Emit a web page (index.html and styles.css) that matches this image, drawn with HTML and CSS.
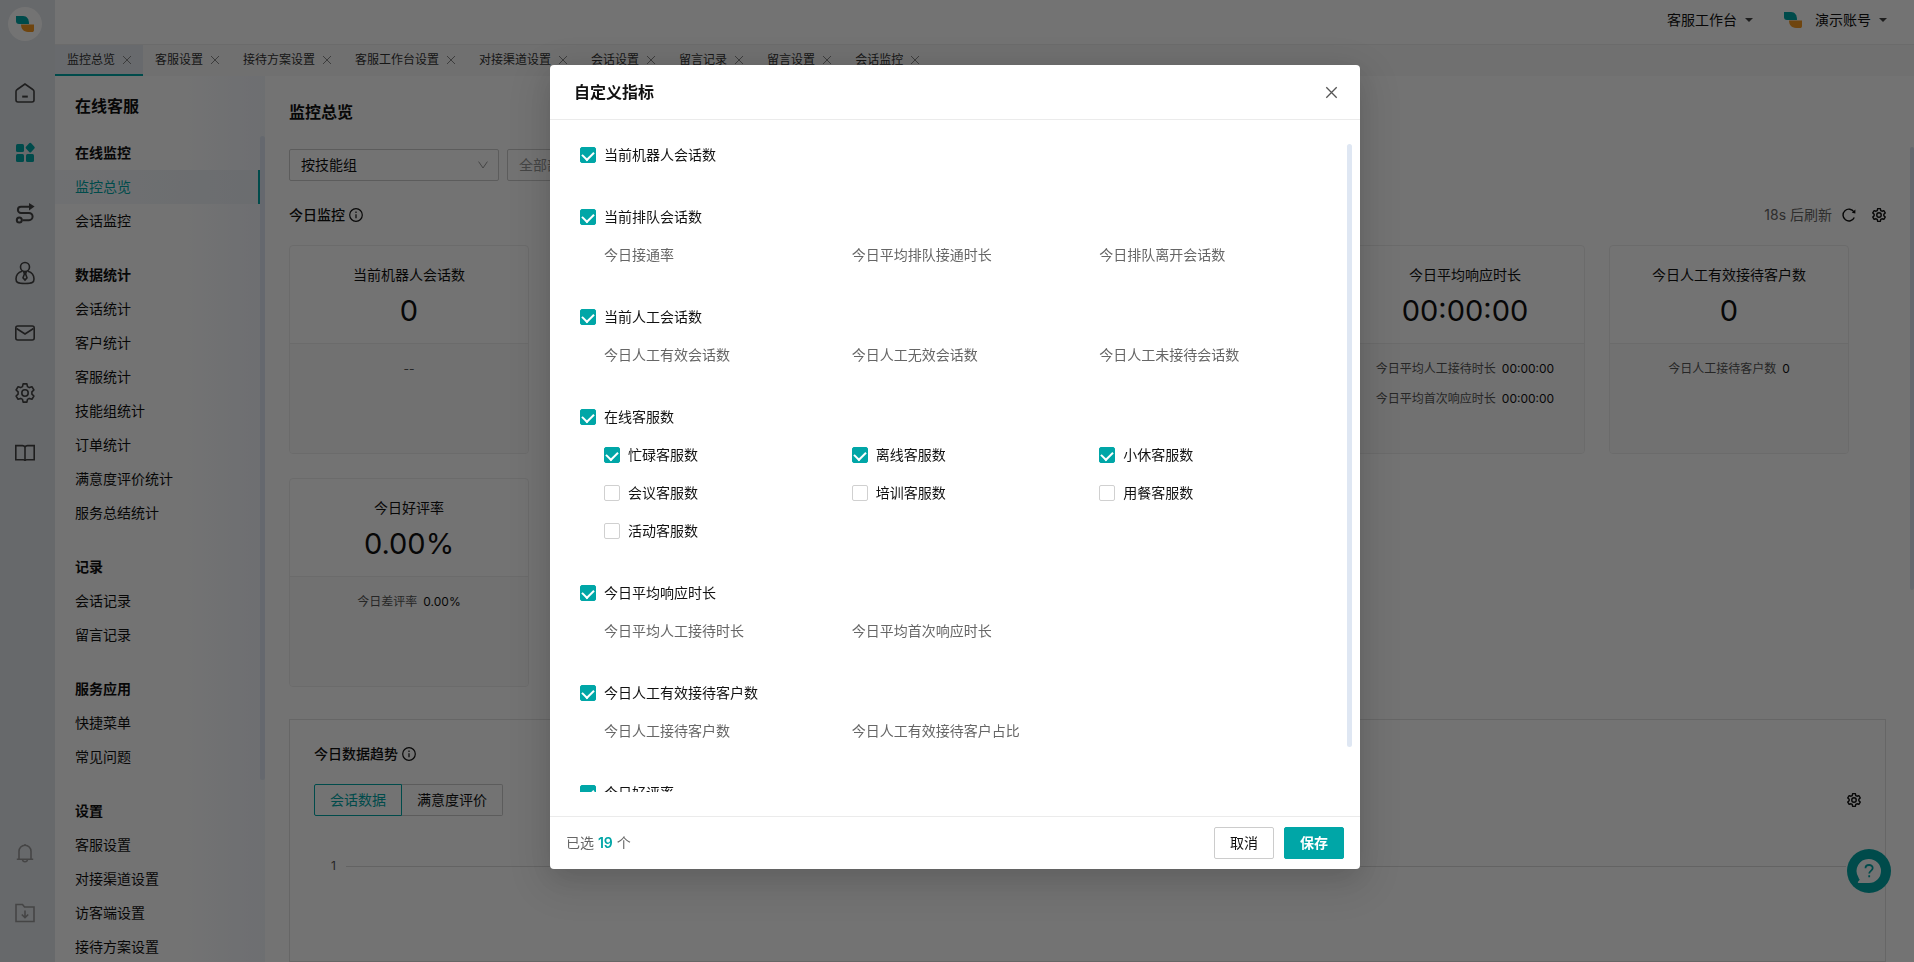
FILE: index.html
```html
<!DOCTYPE html>
<html lang="zh-CN">
<head>
<meta charset="utf-8">
<title>监控总览</title>
<link rel="stylesheet" href="styles.css">
</head>
<body>
<svg class="defs" aria-hidden="true">
  <symbol id="i-x" viewBox="0 0 10 10"><path d="M1 1l8 8M9 1l-8 8"/></symbol>
  <symbol id="i-info" viewBox="0 0 14 14"><circle cx="7" cy="7" r="6.3"/><path d="M7 6.2v4M7 3.6v1.3"/></symbol>
  <symbol id="i-down" viewBox="0 0 10 10"><path d="M.6 1.6L5 8l4.400-6.400"/></symbol>
  <symbol id="i-logo" viewBox="0 0 18 18"><path fill="#00a6a7" d="M0 1h7c4 0 6 3 6 8H3C1 9 0 8 0 6z"/><path fill="#f59a23" d="M5 9.600h13V15c0 1.500-.8 2-2 2h-4c-4.500 0-7-3-7-7.400z"/></symbol>
  <symbol id="i-gear" viewBox="0 0 20 20"><path stroke-linejoin="round" d="M8.100.9h3.800l.6 2.700 1.800 1 2.600-.9 2 3.300-2 1.900v2.200l2 1.900-2 3.300-2.600-.9-1.800 1-.6 2.700H8.100l-.6-2.700-1.800-1-2.600.9-2-3.300 2-1.900V8.900l-2-1.900 2-3.300 2.600.9 1.800-1z"/><circle cx="10" cy="10" r="3.200"/></symbol>
</svg>

<div class="app">
  <nav class="rail" aria-label="主导航">
    <a class="rail-logo" href="#" aria-label="首页"><svg><use href="#i-logo"/></svg></a>
    <div class="rail-main">
      <a href="#" aria-label="主页"><svg viewBox="0 0 20 20"><path d="M10 1L2.200 6.500C1.400 7 1 7.700 1 8.600V17c0 1.300.7 2 2 2h14c1.300 0 2-.7 2-2V8.600c0-.9-.4-1.600-1.200-2.100z"/><path stroke-width="2" d="M7.200 13.600h5.600"/></svg></a>
      <a class="on" href="#" aria-label="在线客服"><svg viewBox="0 0 20 20"><rect x="1" y="1" width="8" height="8" rx="1.500"/><rect x="1" y="11" width="8" height="8" rx="1.500"/><rect x="11" y="11" width="8" height="8" rx="1.500"/><path d="M15.200-.2q.6 0 1 .5l3.200 3.500q.8.900 0 1.800L16.200 9q-1 1-2 0L11 5.600q-.8-.9 0-1.800L14.200.3q.4-.5 1-.5z"/></svg></a>
      <a href="#" aria-label="流程"><svg viewBox="0 0 20 20"><path stroke-width="2" d="M14 3.800H6a3 3 0 0 0 0 6.200h8a3.600 3.600 0 0 1 0 7.200H7.500"/><circle cx="4.300" cy="17" r="2.500" stroke-width="2"/><path class="solid" d="M14 0l5.600 3.600L14 7.400z"/></svg></a>
      <a href="#" aria-label="客户"><svg viewBox="0 0 20 20"><circle cx="10" cy="4" r="4.500"/><path d="M7 8.200C3.500 9.300 1 12.500 1 16c0 3.500 1.500 4.500 9 4.500s9-1 9-4.500c0-3.500-2.500-6.700-6-7.800"/><path d="M8.800 9h2.400l-.6 2 1.400 3.800-2 2.200-2-2.200 1.400-3.800z"/></svg></a>
      <a href="#" aria-label="邮件"><svg viewBox="0 0 20 20"><rect x=".8" y="3" width="18.400" height="14" rx="2"/><path d="M1.500 5.500L10 11l8.500-5.500"/></svg></a>
      <a href="#" aria-label="设置"><svg><use href="#i-gear"/></svg></a>
      <a href="#" aria-label="知识库"><svg viewBox="0 0 20 20"><path d="M10 4.200C9.500 3 8.500 2.600 7.500 2.600H.8v14.200h7.700c.9 0 1.500.5 1.500 1.200 0-.7.6-1.200 1.500-1.200h7.700V2.600h-6.700c-1 0-2 .4-2.500 1.600zV18"/></svg></a>
    </div>
    <div class="rail-foot">
      <a href="#" aria-label="通知"><svg viewBox="0 0 20 20"><path d="M10 1v1.200M4 16V8.200a6 6 0 0 1 12 0V16M1.800 16.200h16.400M7.500 16.500c.3 3 4.700 3 5 0"/></svg></a>
      <a href="#" aria-label="下载"><svg viewBox="0 0 20 20"><path d="M1 1.500h6.500l2 2.500H19v14.500H1zM10 7.500v7M6.800 11.500L10 14.700l3.200-3.200"/></svg></a>
    </div>
  </nav>

  <div class="work">
    <header class="top">
      <button class="drop" type="button">客服工作台<i class="caret"></i></button>
      <button class="drop" type="button"><svg class="avatar"><use href="#i-logo"/></svg>演示账号<i class="caret"></i></button>
    </header>
    <div class="tabs">
      <a class="tab on" href="#">监控总览<svg><use href="#i-x"/></svg></a>
      <a class="tab" href="#">客服设置<svg><use href="#i-x"/></svg></a>
      <a class="tab" href="#">接待方案设置<svg><use href="#i-x"/></svg></a>
      <a class="tab" href="#">客服工作台设置<svg><use href="#i-x"/></svg></a>
      <a class="tab" href="#">对接渠道设置<svg><use href="#i-x"/></svg></a>
      <a class="tab" href="#">会话设置<svg><use href="#i-x"/></svg></a>
      <a class="tab" href="#">留言记录<svg><use href="#i-x"/></svg></a>
      <a class="tab" href="#">留言设置<svg><use href="#i-x"/></svg></a>
      <a class="tab" href="#">会话监控<svg><use href="#i-x"/></svg></a>
    </div>

    <div class="page">
      <aside class="side">
        <h2>在线客服</h2>
        <div class="menu">
          <section><h3>在线监控</h3><a class="on" href="#">监控总览</a><a href="#">会话监控</a></section>
          <section><h3>数据统计</h3><a href="#">会话统计</a><a href="#">客户统计</a><a href="#">客服统计</a><a href="#">技能组统计</a><a href="#">订单统计</a><a href="#">满意度评价统计</a><a href="#">服务总结统计</a></section>
          <section><h3>记录</h3><a href="#">会话记录</a><a href="#">留言记录</a></section>
          <section><h3>服务应用</h3><a href="#">快捷菜单</a><a href="#">常见问题</a></section>
          <section><h3>设置</h3><a href="#">客服设置</a><a href="#">对接渠道设置</a><a href="#">访客端设置</a><a href="#">接待方案设置</a></section>
          <span class="thumb"></span>
        </div>
      </aside>

      <main class="main">
        <h1>监控总览</h1>
        <div class="filters">
          <label class="pick"><select aria-label="统计维度"><option>按技能组</option></select><svg><use href="#i-down"/></svg></label>
          <label class="pick muted"><select aria-label="部门"><option>全部部门</option></select><svg><use href="#i-down"/></svg></label>
        </div>
        <div class="bar">
          <h4>今日监控<svg><use href="#i-info"/></svg></h4>
          <div class="tools"><span>18s 后刷新</span>
            <button type="button" aria-label="刷新"><svg viewBox="0 0 14 14"><path d="M12.300 9.500A5.900 5.900 0 1 1 12 4"/><path class="solid" d="M13.400 1.500v4l-3.600-.8z"/></svg></button>
            <button type="button" aria-label="自定义指标"><svg><use href="#i-gear"/></svg></button>
          </div>
        </div>
        <div class="cards">
          <article class="card"><div class="card-top"><p>当前机器人会话数</p><b>0</b></div><div class="card-sub"><p>--</p></div></article>
          <article class="card"><div class="card-top"><p>当前排队会话数</p><b>0</b></div><div class="card-sub"><p>今日接通率<span>0.00%</span></p></div></article>
          <article class="card"><div class="card-top"><p>当前人工会话数</p><b>0</b></div><div class="card-sub"><p>今日人工有效会话数<span>0</span></p></div></article>
          <article class="card"><div class="card-top"><p>在线客服数</p><b>0</b></div><div class="card-sub"><p>忙碌客服数<span>0</span></p></div></article>
          <article class="card"><div class="card-top"><p>今日平均响应时长</p><b>00:00:00</b></div><div class="card-sub"><p>今日平均人工接待时长<span>00:00:00</span></p><p>今日平均首次响应时长<span>00:00:00</span></p></div></article>
          <article class="card"><div class="card-top"><p>今日人工有效接待客户数</p><b>0</b></div><div class="card-sub"><p>今日人工接待客户数<span>0</span></p></div></article>
          <article class="card"><div class="card-top"><p>今日好评率</p><b>0.00%</b></div><div class="card-sub"><p>今日差评率<span>0.00%</span></p></div></article>
        </div>
        <section class="trend">
          <h4>今日数据趋势<svg><use href="#i-info"/></svg></h4>
          <div class="trend-bar">
            <div class="seg"><button class="on" type="button">会话数据</button><button type="button">满意度评价</button></div>
            <button class="tool" type="button" aria-label="设置"><svg><use href="#i-gear"/></svg></button>
          </div>
          <div class="axis"><span>1</span><i></i></div>
        </section>
        <span class="thumb"></span>
      </main>
    </div>
  </div>
</div>

<button class="help" type="button" aria-label="帮助"><svg viewBox="0 0 44 44"><path class="bubble" d="M22 10a12 12 0 1 1 0 24H11.500c-.8 0-.9-.9-.3-1.400l1.500-1.800c-.2-.9-1-1.200-1.200-2.300A12 12 0 0 1 22 10z"/><path class="mark" d="M18.500 19.300c0-4.400 7.200-4.300 7.200-.2 0 2.700-3.500 2.800-3.500 5.400M22.200 26.300v2"/></svg></button>

<div class="mask">
  <form class="modal" role="dialog" aria-labelledby="dlg">
    <header><h2 id="dlg">自定义指标</h2><button type="button" aria-label="关闭"><svg><use href="#i-x"/></svg></button></header>
    <div class="modal-body">
      <div class="list">
        <fieldset><label><input type="checkbox" checked>当前机器人会话数</label></fieldset>
        <fieldset><label><input type="checkbox" checked>当前排队会话数</label>
          <div class="opts"><span>今日接通率</span><span>今日平均排队接通时长</span><span>今日排队离开会话数</span></div></fieldset>
        <fieldset><label><input type="checkbox" checked>当前人工会话数</label>
          <div class="opts"><span>今日人工有效会话数</span><span>今日人工无效会话数</span><span>今日人工未接待会话数</span></div></fieldset>
        <fieldset><label><input type="checkbox" checked>在线客服数</label>
          <div class="opts">
            <label><input type="checkbox" checked>忙碌客服数</label><label><input type="checkbox" checked>离线客服数</label><label><input type="checkbox" checked>小休客服数</label>
            <label><input type="checkbox">会议客服数</label><label><input type="checkbox">培训客服数</label><label><input type="checkbox">用餐客服数</label>
            <label><input type="checkbox">活动客服数</label></div></fieldset>
        <fieldset><label><input type="checkbox" checked>今日平均响应时长</label>
          <div class="opts"><span>今日平均人工接待时长</span><span>今日平均首次响应时长</span></div></fieldset>
        <fieldset><label><input type="checkbox" checked>今日人工有效接待客户数</label>
          <div class="opts"><span>今日人工接待客户数</span><span>今日人工有效接待客户占比</span></div></fieldset>
        <fieldset><label><input type="checkbox" checked>今日好评率</label></fieldset>
        <span class="thumb"></span>
      </div>
    </div>
    <footer><p>已选 <b>19</b> 个</p><div><button type="button">取消</button><button class="primary" type="submit">保存</button></div></footer>
  </form>
</div>
</body>
</html>
```

FILE: styles.css
```css
* { box-sizing: border-box; margin: 0; padding: 0; }
html, body { height: 100%; overflow: hidden; }
body {
  font: 14px/22px Inter, "Noto Sans CJK SC", sans-serif;
  color: #111;
  background: #fff;
}
a { color: inherit; text-decoration: none; }
button, select, input { font: inherit; color: inherit; }
button { background: none; border: 0; cursor: pointer; }
svg { display: block; fill: none; stroke: currentColor; stroke-width: 1.4; }
.defs { position: absolute; width: 0; height: 0; }
.solid { fill: currentColor; stroke: none; }
.thumb { position: absolute; top: 0; right: 0; width: 5px; border-radius: 3px; background: #dfe7f3; }

.app { display: flex; height: 100%; }

.rail {
  flex: none; width: 55px;
  display: flex; flex-direction: column; align-items: center;
  padding: 7px 5px 29px 0;
  background: #e4e8ed; color: #444;
}
.rail-logo { width: 34px; height: 34px; border-radius: 50%; background: #fff; display: grid; place-items: center; }
.rail-logo svg { width: 18px; height: 18px; stroke: none; }
.rail-main { flex: 1; margin-top: 32px; }
.rail-main a, .rail-foot a { display: grid; place-items: center; width: 40px; height: 40px; margin-bottom: 20px; }
.rail-main svg, .rail-foot svg { width: 20px; height: 20px; overflow: visible; stroke-width: 1.6; }
.rail-main .on svg { fill: #00a6a7; stroke: none; }
.rail-foot { color: #999; }
.rail-foot a:last-child { margin-bottom: 0; }

.work { flex: 1; min-width: 0; display: flex; flex-direction: column; }
.top {
  flex: none; height: 45px; padding: 0 27px 4px 0;
  display: flex; justify-content: flex-end; align-items: center; gap: 31px;
  border-bottom: 1px solid #eee;
}
.drop { display: flex; align-items: center; }
.avatar { width: 18px; height: 18px; margin-right: 13px; stroke: none; }
.caret { margin-left: 8px; border: 4px solid transparent; border-top-color: #444; border-bottom: 0; }

.tabs { flex: none; display: flex; height: 31px; background: #f8f8f8; font-size: 12px; overflow: hidden; }
.tab { flex: none; display: flex; align-items: center; gap: 7px; padding: 0 11px 0 12px; border-bottom: 2px solid transparent; color: #333; }
.tab.on { background: #e7ecf2; border-color: #00a6a7; }
.tab svg { width: 10px; height: 10px; color: #888; stroke-width: 1; }

.page { flex: 1; min-height: 0; display: flex; }
.side {
  flex: none; width: 210px;
  display: flex; flex-direction: column;
  background: linear-gradient(90deg, #fff 60%, #f2f5fb 100%);
}
.side h2 { padding: 19px 20px; font-size: 16px; line-height: 22px; font-weight: 600; }
.menu { position: relative; flex: 1; min-height: 0; overflow: hidden; padding-right: 5px; }
.menu section { margin-bottom: 20px; }
.menu h3, .menu a { display: block; padding: 0 20px; font-size: 14px; line-height: 34px; font-weight: 400; }
.menu h3 { font-weight: 700; }
.menu .on { color: #00a6a7; background: linear-gradient(90deg, #f7f9fc, #edf1f7); border-right: 2px solid #00a6a7; }
.menu .thumb { height: 78%; }

.main { position: relative; flex: 1; min-width: 0; padding: 25px 28px 0 24px; display: flex; flex-direction: column; overflow: hidden; }
.main > * { flex: none; }
.main h1 { font-size: 16px; line-height: 22px; font-weight: 600; }
.main > .thumb { top: 71px; width: 4px; height: 50%; }
.filters { display: flex; gap: 8px; margin-top: 26px; }
.pick { position: relative; width: 210px; }
.pick select { width: 100%; height: 32px; padding: 0 11px; appearance: none; background: #fff; border: 1px solid #ccc; border-radius: 2px; }
.pick svg { position: absolute; right: 11px; top: 11px; width: 10px; height: 10px; color: #999; stroke-width: 1; }
.pick.muted select { color: #999; }
.bar { display: flex; justify-content: space-between; margin-top: 23px; }
h4 { display: flex; align-items: center; gap: 4px; font-size: 14px; font-weight: 500; }
h4 svg { width: 14px; height: 14px; stroke-width: 1.2; }
.tools { display: flex; align-items: center; gap: 10px; color: #666; }
.tools svg, .tool svg { width: 14px; height: 14px; color: #111; overflow: visible; }
.tool svg, .tools button + button svg { stroke-width: 2; }
.tools button + button { margin-left: 6px; }

.cards { display: flex; flex-wrap: wrap; gap: 24px; margin-top: 19px; }
.card { width: 240px; min-height: 209px; display: flex; flex-direction: column; border: 1px solid #ededed; border-radius: 4px; overflow: hidden; text-align: center; }
.card-top { padding: 18px 0 12px; border-bottom: 1px solid #ededed; }
.card-top b { display: block; margin-top: 5px; font-size: 29px; line-height: 40px; font-weight: 400; }
.card-sub { flex: 1; padding: 14px 0; background: #fafafa; font-size: 12px; color: #555; }
.card-sub p { margin-bottom: 8px; }
.card-sub span { margin-left: 6px; color: #111; }

.trend { flex: 1 0 auto; margin-top: 32px; padding: 23px 24px; border: 1px solid #e3e3e3; }
.trend-bar { display: flex; justify-content: space-between; align-items: center; margin-top: 19px; }
.seg { display: flex; }
.seg button { height: 32px; padding: 0 15px; border: 1px solid #ccc; border-radius: 0 2px 2px 0; border-left: 0; }
.seg .on { border: 1px solid #00a6a7; border-radius: 2px 0 0 2px; color: #00a6a7; }
.axis { display: flex; align-items: center; gap: 10px; margin: 39px 15px 0 17px; font-size: 12px; color: #555; }
.axis i { flex: 1; height: 1px; background: #dcdcdc; }

.help { position: fixed; right: 23px; bottom: 69px; width: 44px; height: 44px; border-radius: 50%; background: #00a6a7; }
.bubble { fill: #fff; stroke: none; }
.mark { stroke: #00a6a7; stroke-width: 1.8; }

.mask { position: fixed; inset: 0; padding: 65px 4px 0 0; background: rgba(0, 0, 0, .55); }
.modal {
  width: 810px; max-width: 100%; margin: 0 auto;
  background: #fff; border-radius: 4px;
  box-shadow: 0 9px 28px rgba(0, 0, 0, .12), 0 12px 48px 16px rgba(0, 0, 0, .08);
}
.modal header { display: flex; justify-content: space-between; align-items: center; padding: 16px 22px 16px 24px; border-bottom: 1px solid #ebebeb; }
.modal h2 { font-size: 16px; line-height: 22px; font-weight: 600; }
.modal header svg { width: 13px; height: 13px; color: #555; stroke-width: 1; }
.modal-body { padding: 24px 8px 24px 24px; }
.list { position: relative; max-height: calc(100vh - 314px); overflow: hidden; padding: 0 5px 0 6px; }
.list .thumb { height: 93%; }
fieldset { border: 0; padding-bottom: 40px; }
fieldset label { display: flex; align-items: center; gap: 8px; }
.opts { display: grid; grid-template-columns: repeat(3, 1fr); row-gap: 16px; margin: 16px 0 0 24px; color: #666; }
.opts label { color: #111; }
input[type="checkbox"] { appearance: none; flex: none; display: grid; place-items: center; width: 16px; height: 16px; border: 1px solid #d0d0d0; border-radius: 2px; background: #fff; }
input[type="checkbox"]:checked { border-color: #00a6a7; background: #00a6a7; }
input[type="checkbox"]:checked::after { content: ""; width: 6px; height: 9px; margin-bottom: 2px; border: solid #fff; border-width: 0 2px 2px 0; transform: rotate(45deg); }
.modal footer { display: flex; justify-content: space-between; align-items: center; padding: 10px 16px; border-top: 1px solid #ebebeb; color: #666; }
.modal footer b { font-weight: 600; color: #00a6a7; }
.modal footer div { display: flex; gap: 10px; }
.modal footer button { width: 60px; height: 32px; border: 1px solid #ccc; border-radius: 2px; color: #111; }
.modal footer .primary { border-color: #00a6a7; background: #00a6a7; color: #fff; font-weight: 600; }
```
